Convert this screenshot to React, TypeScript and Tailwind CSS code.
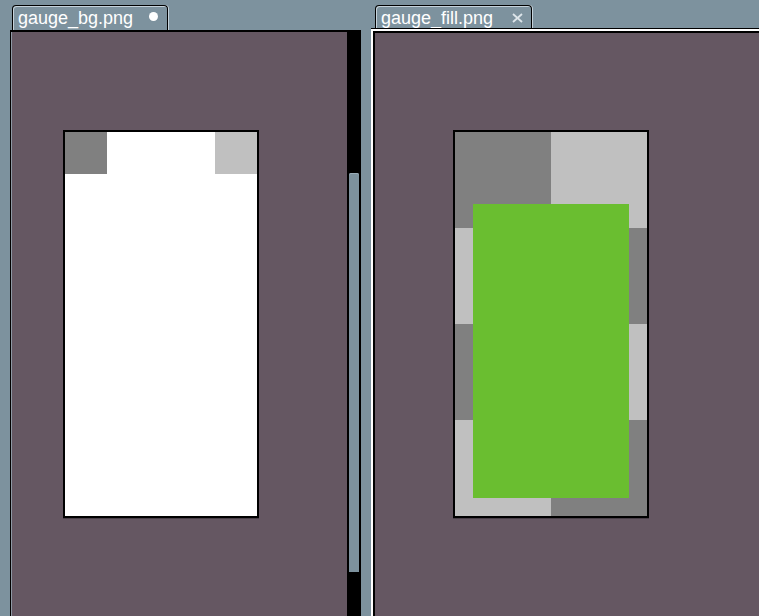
/* Two sprite editor tabs side by side: gauge_bg.png and gauge_fill.png */

const TAB_FONT = { fontFamily: '"Liberation Sans", Arial, sans-serif' };

function Tab({
  label,
  width,
  height,
  children,
}: {
  label: string;
  width: string;
  height: string;
  children: React.ReactNode;
}) {
  return (
    <div
      className={`${width} ${height} flex items-start justify-between rounded-t-[4px] border-x border-t border-black bg-[#7d929e] shadow-[inset_1px_1px_0_#c6d3db,1px_0_0_#c6d3db]`}
    >
      <span
        className="pl-[5px] pt-[3px] text-[18px] leading-[18px] text-white"
        style={TAB_FONT}
      >
        {label}
      </span>
      {children}
    </div>
  );
}

function GaugeBg() {
  return (
    <div className="flex h-[388px] w-[196px] flex-col border-2 border-black bg-white shadow-[0_1px_0_#4a4049]">
      <div className="flex justify-between">
        <div className="h-[42px] w-[42px] bg-[#808080]" />
        <div className="h-[42px] w-[42px] bg-[#c0c0c0]" />
      </div>
    </div>
  );
}

function GaugeFill() {
  const checker = [
    ["#808080", "#c0c0c0"],
    ["#c0c0c0", "#808080"],
    ["#808080", "#c0c0c0"],
    ["#c0c0c0", "#808080"],
  ];
  return (
    <div className="relative h-[388px] w-[196px] border-2 border-black shadow-[0_1px_0_#4a4049]">
      <div className="grid grid-cols-2">
        {checker.flat().map((c, i) => (
          <div key={i} className="h-[96px]" style={{ background: c }} />
        ))}
      </div>
      <div className="absolute left-[18px] top-[72px] h-[294px] w-[156px] bg-[#6abe30]" />
    </div>
  );
}

export default function App() {
  return (
    <div className="flex h-[616px] w-[759px] overflow-hidden bg-[#7d929e]">
      {/* Left editor */}
      <div className="ml-[10px] flex w-[351px] flex-col">
        <div className="h-[30px] pl-[2px] pt-[5px]">
          <Tab label="gauge_bg.png" width="w-[156px]" height="h-[25px]">
            <span className="mr-[9px] mt-[6px] h-[9px] w-[9px] rounded-full bg-white" />
          </Tab>
        </div>
        <div className="flex flex-1 border-l border-t-2 border-black">
          <div className="flex-1 bg-[#655762] pl-[52px] pt-[98px] shadow-[inset_1px_0_0_#8e98a4]">
            <GaugeBg />
          </div>
          <div className="w-[14px] bg-black px-[2px] pt-[141px]">
            <div className="h-[399px] rounded-t-[2px] bg-[#7d929e] shadow-[inset_0_1px_0_#9aadb8]" />
          </div>
        </div>
      </div>

      {/* Right editor (focused) */}
      <div className="ml-[10px] flex flex-1 flex-col">
        <div className="h-[28px] pl-[4px] pt-[5px]">
          <Tab label="gauge_fill.png" width="w-[157px]" height="h-[23px]">
            <svg
              width="11"
              height="10"
              viewBox="0 0 11 10"
              className="mr-[8px] mt-[7px]"
              stroke="#dde5ea"
              strokeWidth="1.8"
            >
              <line x1="1" y1="1" x2="10" y2="9" />
              <line x1="10" y1="1" x2="1" y2="9" />
            </svg>
          </Tab>
        </div>
        <div className="flex flex-1 flex-col border-t border-black">
          <div className="flex flex-1 flex-col border-l-2 border-t-2 border-white">
            <div className="flex-1 border-l-2 border-t-2 border-black bg-[#655762] pl-[78px] pt-[97px]">
              <GaugeFill />
            </div>
          </div>
        </div>
      </div>
    </div>
  );
}
